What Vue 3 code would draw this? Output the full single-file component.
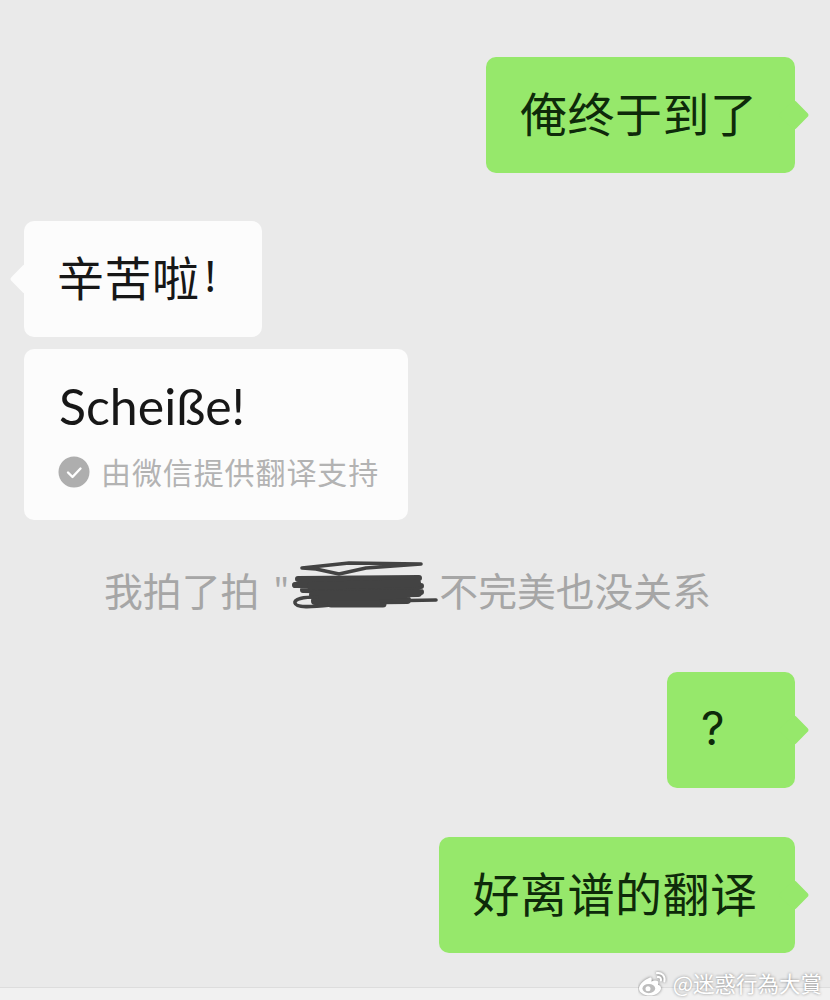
<script setup>
const check = 'M-6 0.5 L-1.5 5 L6.5 -3.5'
</script>

<template>
  <div class="page">
    <div class="row right first">
      <div class="bubble green">俺终于到了</div>
    </div>
    <div class="row left gap-a">
      <div class="bubble white">辛苦啦<span class="bang">!</span></div>
    </div>
    <div class="row left gap-b">
      <div class="card">
        <div class="latin">Scheiße!</div>
        <div class="note">
          <svg class="tick" width="32" height="32" viewBox="-16 -16 32 32">
            <circle r="15.5" fill="#aeaeae" />
            <path :d="check" fill="none" stroke="#fff" stroke-width="2.4" stroke-linecap="round" stroke-linejoin="round" />
          </svg>
          <span class="note-text">由微信提供翻译支持</span>
        </div>
      </div>
    </div>
    <div class="system">
      <span>我拍了拍</span>
      <span class="quote">"</span>
      <span class="redact">
        <svg class="scribble" width="150" height="55" viewBox="0 0 150 55">
          <g fill="none" stroke="#434343" stroke-linecap="round" stroke-linejoin="round">
            <path stroke-width="3.6" d="M11 10 L58 5 L130 6 L75 10 L48 16 L25 11 Z" />
            <path stroke-width="6" d="M7 21 L128 20 L4 27 L130 28 L12 32 L130 34" />
            <path stroke-width="8" d="M20 28 L126 25 M22 37 L127 35 M24 43 L116 42" />
            <path stroke-width="3.6" d="M26 39 C12 39 3 41 4 45 C5 50 20 49 40 47 L70 47" />
            <path stroke-width="7" d="M40 46 L92 46" />
            <path stroke-width="3.6" d="M90 43 L145 42" />
          </g>
        </svg>
      </span>
      <span>不完美也没关系</span>
    </div>
    <div class="row right gap-c">
      <div class="bubble green q"><span class="qmark">?</span></div>
    </div>
    <div class="row right gap-d">
      <div class="bubble green">好离谱的翻译</div>
    </div>
    <div class="mark">
      <svg width="30" height="26" viewBox="0 0 30 26">
        <g class="logo">
          <path fill="#fff" d="M12 7.5C6.5 9.5 1 14.5 1 18.5 1 22.8 6.3 25.5 11.5 25.5 18 25.5 23 21.6 23 18.2 23 16.2 21.4 15.2 20 14.8 20.4 13.6 20.6 12.2 19.8 11.3 18.3 9.8 14.8 11 13.4 11.5 13.8 10 14.2 6.8 12 7.5Z" />
          <ellipse cx="10.8" cy="18.6" rx="6.4" ry="4.6" fill="#bdbdbd" />
          <circle cx="10" cy="18.8" r="2.5" fill="#fff" />
          <path fill="none" stroke="#fff" stroke-width="2" stroke-linecap="round" d="M19 3C23.5 2.3 27.6 6 26.4 11.4M19.8 7C22 6.7 23.5 8.3 22.9 10.6" />
        </g>
      </svg>
      <span>@迷惑行為大賞</span>
    </div>
    <div class="strip"></div>
  </div>
</template>

<style scoped>
.page {
  position: relative;
  width: 830px;
  height: 1000px;
  overflow: hidden;
  background: #eaeaea;
  font-family: "Noto Sans CJK SC", "Noto Sans", sans-serif;
  color: #171717;
}
.row { display: flex; }
.right { justify-content: flex-end; padding-right: 35px; }
.left { justify-content: flex-start; padding-left: 24px; }
.first { padding-top: 57px; }
.gap-a { margin-top: 48px; }
.gap-b { margin-top: 12px; }
.gap-c { margin-top: 58px; }
.gap-d { margin-top: 49px; }
.bubble {
  position: relative;
  height: 116px;
  box-sizing: border-box;
  display: flex;
  align-items: center;
  padding: 0 37.5px 8px 34px;
  border-radius: 10px;
  font-size: 47px;
  letter-spacing: 0.5px;
  line-height: 1;
  white-space: nowrap;
}
.bubble::after {
  content: "";
  position: absolute;
  top: 47px;
  width: 22px;
  height: 22px;
  transform: rotate(45deg);
  border-radius: 3px;
}
.green { background: #96e86b; color: #0e2a0a; }
.green::after { right: -10px; background: #96e86b; }
.white { background: #fcfcfc; padding: 0 45px 8px 33px; }
.white::after { left: -10px; background: #fcfcfc; }
.bang { margin-left: 5px; font-size: 43px; font-family: "Noto Sans", sans-serif; }
.q { width: 128px; padding: 0 0 4px 34px; }
.qmark { font-family: "Inter", sans-serif; font-size: 46px; }
.card {
  width: 384px;
  height: 171px;
  box-sizing: border-box;
  padding: 28px 35px 0;
  border-radius: 10px;
  background: #fcfcfc;
}
.latin {
  font-family: "Lato", "Noto Sans", sans-serif;
  font-size: 50px;
  line-height: 58px;
}
.note {
  display: flex;
  align-items: center;
  gap: 11px;
  margin-top: 20px;
  margin-left: -1px;
  font-size: 30px;
  line-height: 36px;
  letter-spacing: 0.9px;
  color: #b3b3b3;
  white-space: nowrap;
}
.note-text { margin-top: -2px; }
.tick { flex: none; }
.system {
  display: flex;
  justify-content: center;
  align-items: center;
  height: 50px;
  margin-top: 44px;
  padding-right: 15px;
  font-size: 38.8px;
  line-height: 50px;
  color: #a6a6a6;
  white-space: nowrap;
}
.quote { margin-left: 14px; font-size: 34px; }
.redact {
  position: relative;
  width: 150px;
  height: 50px;
}
.scribble {
  position: absolute;
  left: 2px;
  top: -6px;
}
.mark {
  position: absolute;
  right: 8px;
  bottom: 3px;
  z-index: 1;
  display: flex;
  align-items: center;
  gap: 5px;
  font-size: 21.5px;
  line-height: 28px;
  color: #fff;
  text-shadow: 0 0 3px rgba(0, 0, 0, 0.45);
  white-space: nowrap;
}
.logo { filter: drop-shadow(0 0 1.5px rgba(0, 0, 0, 0.5)); }
.strip {
  position: absolute;
  left: 0;
  right: 0;
  bottom: 0;
  height: 12px;
  border-top: 1px solid #dddddd;
  background: #f1f1f1;
}
</style>
